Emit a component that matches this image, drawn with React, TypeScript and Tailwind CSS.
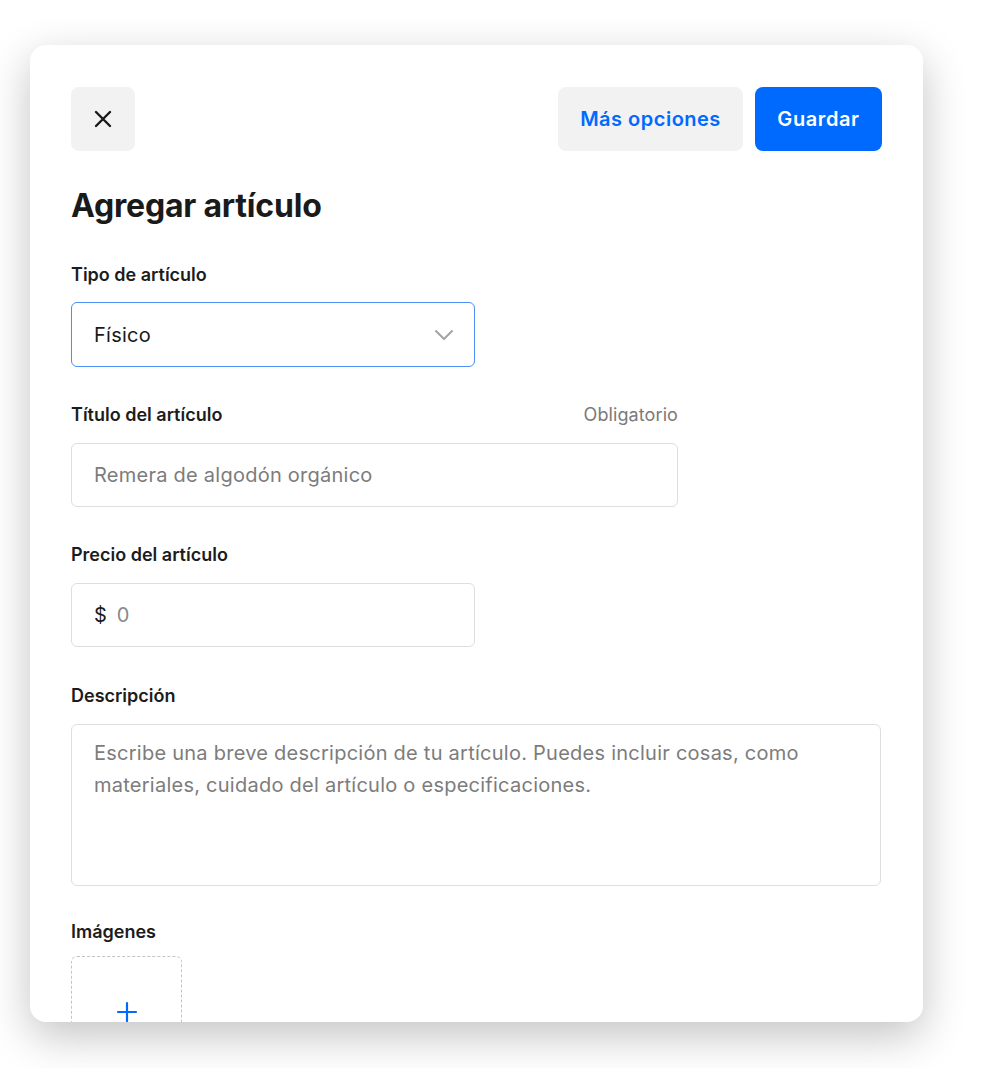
import React from "react";

const font = { fontFamily: "Inter, 'Noto Sans', Roboto, sans-serif" };

function Label({ children, right }: { children: React.ReactNode; right?: string }) {
  return (
    <div className="flex items-center justify-between h-6 text-[18px] font-semibold text-[#1c1c1c] leading-6">
      <span>{children}</span>
      {right && <span className="font-normal text-[#7a7a7a] tracking-[0.1px]">{right}</span>}
    </div>
  );
}

export default function App() {
  return (
    <div className="w-[984px] h-[1068px] bg-white pt-[45px] pl-[30px]" style={font}>
      <div className="w-[893px] h-[977px] bg-white rounded-[16px] overflow-hidden shadow-[0_14px_44px_rgba(0,0,0,0.24)] px-[41px] pt-[42px]">
        <div className="flex items-center justify-between">
          <button className="w-16 h-16 rounded-lg bg-[#f2f2f2] flex items-center justify-center">
            <svg width="18" height="18" viewBox="0 0 18 18" fill="none" stroke="#1a1a1a" strokeWidth="2.4" strokeLinecap="round">
              <path d="M2 2L16 16M16 2L2 16" />
            </svg>
          </button>
          <div className="flex gap-3">
            <button className="h-16 w-[185px] rounded-lg bg-[#f2f2f2] text-[#006aff] text-[20px] font-semibold tracking-[0.5px]">Más opciones</button>
            <button className="h-16 w-[127px] rounded-lg bg-[#006aff] text-white text-[20px] font-semibold tracking-[0.6px]">Guardar</button>
          </div>
        </div>

        <h1 className="mt-[35px] h-10 leading-10 text-[32px] font-bold text-[#1a1a1a] tracking-[-0.2px]">Agregar artículo</h1>

        <div className="mt-[37px] w-[404px]">
          <Label>Tipo de artículo</Label>
          <div className="mt-[15px] h-[65px] rounded-md border border-[#4d8ff5] flex items-center justify-between pl-[22px] pr-[20px]">
            <span className="text-[20px] text-[#1a1a1a] tracking-[0.25px]">Físico</span>
            <svg width="20" height="12" viewBox="0 0 20 12" fill="none" stroke="#a3a3a3" strokeWidth="2" strokeLinecap="round" strokeLinejoin="round">
              <path d="M2 2L10 10L18 2" />
            </svg>
          </div>
        </div>

        <div className="mt-9 w-[607px]">
          <Label right="Obligatorio">Título del artículo</Label>
          <div className="mt-4 h-[64px] rounded-md border border-[#dedede] flex items-center pl-[22px]">
            <span className="text-[20px] text-[#7c7c7c] tracking-[0.25px]">Remera de algodón orgánico</span>
          </div>
        </div>

        <div className="mt-9 w-[404px]">
          <Label>Precio del artículo</Label>
          <div className="mt-4 h-[64px] rounded-md border border-[#dedede] flex items-center pl-[22px] gap-[10px]">
            <span className="text-[20px] text-[#1a1a1a]">$</span>
            <span className="text-[20px] text-[#8a8a8a]">0</span>
          </div>
        </div>

        <div className="mt-[37px] w-[810px]">
          <Label>Descripción</Label>
          <div className="mt-4 h-[162px] rounded-md border border-[#dedede] pl-[22px] pr-[60px] pt-3">
            <p className="text-[20px] leading-8 text-[#7c7c7c] tracking-[0.25px]">
              Escribe una breve descripción de tu artículo. Puedes incluir cosas, como materiales, cuidado del artículo o especificaciones.
            </p>
          </div>
        </div>

        <div className="mt-[34px]">
          <Label>Imágenes</Label>
          <div className="mt-3 w-[111px] h-[111px] rounded-md border border-dashed border-[#c4c4c4] flex items-center justify-center">
            <svg width="22" height="22" viewBox="0 0 22 22" fill="none" stroke="#006aff" strokeWidth="2.2" strokeLinecap="round">
              <path d="M11 2V20M2 11H20" />
            </svg>
          </div>
        </div>
      </div>
    </div>
  );
}
